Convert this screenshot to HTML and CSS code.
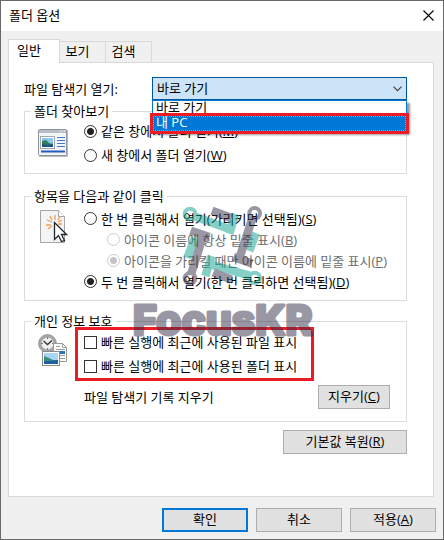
FILE: index.html
```html
<!DOCTYPE html>
<html lang="ko">
<head>
    <meta charset="UTF-8">
    <meta name="viewport" content="width=device-width, initial-scale=1.0">
    <title>폴더 옵션</title>
    <link rel="stylesheet" href="styles.css">
</head>
<body>
    <div class="dialog" role="dialog" aria-labelledby="dialog-title">
        <header class="titlebar">
            <span id="dialog-title">폴더 옵션</span>
            <button type="button" class="close" aria-label="닫기">
                <svg width="11" height="11" viewBox="0 0 11 11"><path d="M.5 .5l10 10M10.500 .5l-10 10" stroke="#000" stroke-width="1.100" fill="none"/></svg>
            </button>
        </header>

        <div class="tabs" role="tablist">
            <button type="button" class="tab active" role="tab" aria-selected="true">일반</button>
            <button type="button" class="tab" role="tab">보기</button>
            <button type="button" class="tab" role="tab">검색</button>
        </div>

        <main class="panel">
            <div class="open-row">
                <label for="open-to">파일 탐색기 열기:</label>
                <div class="combo">
                    <select id="open-to">
                        <option>바로 가기</option>
                        <option>내 PC</option>
                    </select>
                    <svg class="chevron" width="9" height="6" viewBox="0 0 9 6"><path d="M.5 .7l4 4 4-4" stroke="#444" stroke-width="1.200" fill="none"/></svg>
                    <ul class="combo-list" role="listbox">
                        <li role="option">바로 가기</li>
                        <li role="option" class="selected" aria-selected="true">내 PC</li>
                    </ul>
                </div>
            </div>

            <fieldset class="browse">
                <legend>폴더 찾아보기</legend>
                <div class="group">
                    <svg class="icon middle" width="30" height="28" viewBox="0 0 30 28">
                        <rect x="1" y="1" width="29" height="27" rx="1" fill="#bbb"/>
                        <rect x=".5" y=".5" width="28" height="26" rx="1" fill="#f4f5f7" stroke="#8d939a"/>
                        <path d="M1 1h27v3H1z" fill="#b6bdc8"/>
                        <path d="M22 2h1M24 2h1M26 2h1" stroke="#fff"/>
                        <rect x="2.500" y="7.500" width="14" height="12" fill="#fff" stroke="#a0a7ad"/>
                        <rect x="4" y="9" width="11" height="9" fill="#8cc7ed"/>
                        <path d="M4 12l4-1 3 3 4 1v3H4z" fill="#327a62"/>
                        <path d="M4 15l5 1 6-1v3H4z" fill="#1c5688"/>
                        <path d="M19 8.500h8M19 11.500h8M19 14.500h8M19 17.500h8" stroke="#4377cd"/>
                        <path d="M3 22.500h24" stroke="#2459bb" stroke-width="2"/>
                    </svg>
                    <div class="choices">
                        <label class="tall"><input type="radio" name="browse" checked><span>같은 창에서 폴더 열기(<u>M</u>)</span></label>
                        <label class="tall"><input type="radio" name="browse"><span>새 창에서 폴더 열기(<u>W</u>)</span></label>
                    </div>
                </div>
            </fieldset>

            <fieldset class="clicks">
                <legend>항목을 다음과 같이 클릭</legend>
                <div class="group">
                    <svg class="icon" width="30" height="36" viewBox="0 0 30 36">
                        <path d="M2.500 2.500h18l6 6v26h-24z" fill="#f4f4f4" stroke="#a5a5a5"/>
                        <path d="M20.500 2.500v6h6" fill="#fff" stroke="#a5a5a5"/>
                        <path d="M17 7v5M12 8l2 4M22 8l-2 4M9 12l5 2M8 17h5M10 21l4-3M20 14l4-2M20 16h4" stroke="#f09a55" stroke-width="1.300"/>
                        <path d="M16.500 14.500v17l4-4 3 6 3-1-3-6h5z" fill="#fff" stroke="#20242e" stroke-width="1.300"/>
                    </svg>
                    <div class="choices">
                        <label><input type="radio" name="click"><span>한 번 클릭해서 열기(가리키면 선택됨)(<u>S</u>)</span></label>
                        <label class="sub"><input type="radio" name="underline" disabled><span>아이콘 이름에 항상 밑줄 표시(<u>B</u>)</span></label>
                        <label class="sub"><input type="radio" name="underline" checked disabled><span>아이콘을 가리킬 때만 아이콘 이름에 밑줄 표시(<u>P</u>)</span></label>
                        <label><input type="radio" name="click" checked><span>두 번 클릭해서 열기(한 번 클릭하면 선택됨)(<u>D</u>)</span></label>
                    </div>
                </div>
            </fieldset>

            <fieldset class="privacy">
                <legend>개인 정보 보호</legend>
                <div class="group">
                    <svg class="icon lower" width="30" height="33" viewBox="0 0 30 33">
                        <circle cx="9.500" cy="9.500" r="7.500" fill="#eef0ee" stroke="#a3a6a5" stroke-width="3"/>
                        <circle cx="9.500" cy="9.500" r="9" fill="none" stroke="#7b7e7d" stroke-width=".6"/>
                        <path d="M5.500 7l4 3.500 4.500-4" stroke="#33383b" stroke-width="1.400" fill="none"/>
                        <path d="M9.500 3v2M9.500 14v2M3 9.500h2M14 9.500h2" stroke="#777"/>
                        <path d="M15.500 9.500h9l4 4v14h-13z" fill="#fff" stroke="#999"/>
                        <path d="M24.500 9.500v4h4" fill="none" stroke="#999"/>
                        <path d="M18 12.500h4M18 15.500h9M18 18.500h3M18 21.500h9M18 24.500h9" stroke="#9aa0a6"/>
                        <path d="M22 17h5v3h-5z" fill="#2d70b8"/>
                        <rect x="4.500" y="17.500" width="17" height="14" fill="#fff" stroke="#858a8e"/>
                        <rect x="6" y="19" width="14" height="11" fill="#a9d4f4"/>
                        <path d="M6 22l5 2 4 2h5v4H6z" fill="#3f8c7c"/>
                        <path d="M6 27l6 0 8-1v4H6z" fill="#1e60a5"/>
                    </svg>
                    <div class="choices">
                        <div class="marked">
                            <label class="tall"><input type="checkbox"><span>빠른 실행에 최근에 사용된 파일 표시</span></label>
                            <label class="tall"><input type="checkbox"><span>빠른 실행에 최근에 사용된 폴더 표시</span></label>
                        </div>
                        <div class="clear-row">
                            <span>파일 탐색기 기록 지우기</span>
                            <button type="button" class="btn clear">지우기(<u>C</u>)</button>
                        </div>
                    </div>
                </div>
            </fieldset>

            <button type="button" class="btn restore">기본값 복원(<u>R</u>)</button>
        </main>

        <footer class="footer">
            <button type="button" class="btn default">확인</button>
            <button type="button" class="btn">취소</button>
            <button type="button" class="btn">적용(<u>A</u>)</button>
        </footer>

        <!-- FocusKR watermark over the dialog -->
        <svg class="watermark" width="200" height="170" viewBox="0 0 200 170">
            <g transform="translate(58 10) scale(.3333)" fill="none" stroke-width="25">
                <g stroke="#0fa191">
                    <circle cx="36" cy="42" r="16" stroke-width="12"/>
                    <path d="M50 49L156 88M172 42L154 101"/>
                    <path d="M234 99L214 153"/>
                    <circle cx="230" cy="234" r="16" stroke-width="12"/>
                    <path d="M216 227L104 195M101 168L82 228"/>
                    <path d="M51 112L28 174"/>
                </g>
                <g stroke="#353149">
                    <path d="M102 32L160 54"/>
                    <circle cx="230" cy="40" r="16" stroke-width="12"/>
                    <path d="M223 55L187 166M167 171L222 191"/>
                    <path d="M106 217L160 239"/>
                    <circle cx="36" cy="235" r="16" stroke-width="12"/>
                    <path d="M40 220L74 112M38 92L94 111"/>
                </g>
            </g>
            <text class="watermark-text" x="13" y="145">FocusKR</text>
        </svg>
    </div>
</body>
</html>
```
FILE: styles.css
```css
* {
    box-sizing: border-box;
}
body {
    margin: 0;
    font-family: "Open Sans", "Noto Sans CJK KR", sans-serif;
    font-size: 13px;
    line-height: 16px;
    color: #000;
}
button, select, input {
    font: inherit;
    color: inherit;
    margin: 0;
}
.dialog {
    position: relative;
    display: flex;
    flex-direction: column;
    min-height: 100vh;
    background-color: #f0f0f0;
    border: 1px solid #6b686c;
}
.titlebar {
    display: flex;
    align-items: center;
    justify-content: space-between;
    height: 30px;
    padding: 0 9px 2px 8px;
    background-color: #fff;
}
.close {
    display: flex;
    padding: 0;
    border: none;
    background: none;
}

/* tabs */
.tabs {
    display: flex;
    align-items: flex-end;
    padding: 8px 7px 0;
}
.tab {
    height: 21px;
    width: 46px;
    padding: 0 10px 2px 0;
    border: 1px solid #d9d9d9;
    border-left: none;
    border-bottom: none;
    background-color: #f0f0f0;
}
.tab.active {
    position: relative;
    width: 52px;
    height: 24px;
    margin-bottom: -1px;
    padding-bottom: 4px;
    border-left: 1px solid #d9d9d9;
    background-color: #fff;
}
.panel {
    flex: 1;
    margin: 0 9px 0 7px;
    padding: 14px 26px 0 15px;
    background-color: #fff;
    border: 1px solid #d9d9d9;
}

/* drop-down */
.open-row {
    display: flex;
    align-items: center;
    margin-bottom: 3px;
}
.open-row label {
    width: 128px;
}
.combo {
    position: relative;
    flex: 1;
}
.combo select {
    display: block;
    appearance: none;
    width: 100%;
    height: 23px;
    padding: 0 4px 1px;
    border: 1px solid #005499;
    border-radius: 0;
    background-color: #cce4f7;
}
.chevron {
    position: absolute;
    right: 5px;
    top: 9px;
}
.combo-list {
    position: absolute;
    top: 23px;
    left: 0;
    right: 0;
    margin: 0;
    padding: 0;
    list-style: none;
    background-color: #fff;
    border: 1px solid #0078d7;
    box-shadow: 3px 3px 2px rgba(0, 0, 0, 0.4);
}
.combo-list li {
    height: 15px;
    padding-left: 3px;
    line-height: 13px;
}
.combo-list .selected {
    position: relative;
    color: #fff;
    background-color: #0078d7;
    border: 1px dotted #e09040;
    padding-left: 2px;
    line-height: 11px;
    outline: 3px solid #ed1c24;
}

/* groups */
fieldset {
    min-width: 0;
    margin: 0;
    padding: 0 16px 6px 13px;
    border: 1px solid #dcdcdc;
}
legend {
    height: 16px;
    margin-left: -7px;
    padding: 0 3px;
}
.group {
    display: flex;
}
.icon {
    flex: none;
    margin-right: 16px;
}
.icon.middle {
    align-self: center;
}
.icon.lower {
    margin-top: 7px;
}
.choices {
    flex: 1;
    white-space: nowrap;
}
.choices label {
    display: flex;
    align-items: center;
    gap: 4px;
    height: 21px;
}
.choices .tall {
    height: 24px;
}
.choices .sub {
    padding-left: 23px;
    color: #6d6d6d;
}
.clicks {
    margin-top: 14px;
    padding-top: 4px;
    padding-bottom: 8px;
}
.privacy {
    margin-top: 12px;
    padding-bottom: 12px;
}
.privacy .group {
    margin-top: -2px;
}
input[type="radio"], input[type="checkbox"] {
    appearance: none;
    flex: none;
    width: 13px;
    height: 13px;
    border: 1px solid #333;
    background-color: #fff;
}
input[type="radio"] {
    border-radius: 50%;
}
input[type="radio"]:checked {
    background-image: radial-gradient(circle, #222 3px, transparent 4px);
}
input[type="radio"]:disabled {
    border-color: #ccc;
}
input[type="radio"]:checked:disabled {
    background-image: radial-gradient(circle, #c4c4c4 3px, transparent 4px);
}
.marked {
    width: 239px;
    margin-left: -9px;
    padding-left: 6px;
    border: 3px solid #ed1c24;
}
.clear-row {
    display: flex;
    align-items: center;
    justify-content: space-between;
    margin-top: 4px;
}

/* buttons */
.btn {
    width: 86px;
    height: 24px;
    padding: 0 0 2px;
    border: 1px solid #adadad;
    background-color: #e1e1e1;
}
.btn.clear {
    width: 72px;
}
.btn.restore {
    display: block;
    width: 124px;
    margin: 8px 0 0 auto;
}
.btn.default {
    border: 2px solid #0078d7;
}
.footer {
    display: flex;
    justify-content: flex-end;
    gap: 8px;
    padding: 11px 7px 7px;
}

.watermark {
    position: absolute;
    left: 119px;
    top: 189px;
    opacity: 0.5;
    pointer-events: none;
}
.watermark-text {
    font-family: Inter, sans-serif;
    font-size: 41px;
    font-weight: 800;
    fill: #353149;
    stroke: #353149;
    stroke-width: 3px;
    stroke-linejoin: round;
}
```
